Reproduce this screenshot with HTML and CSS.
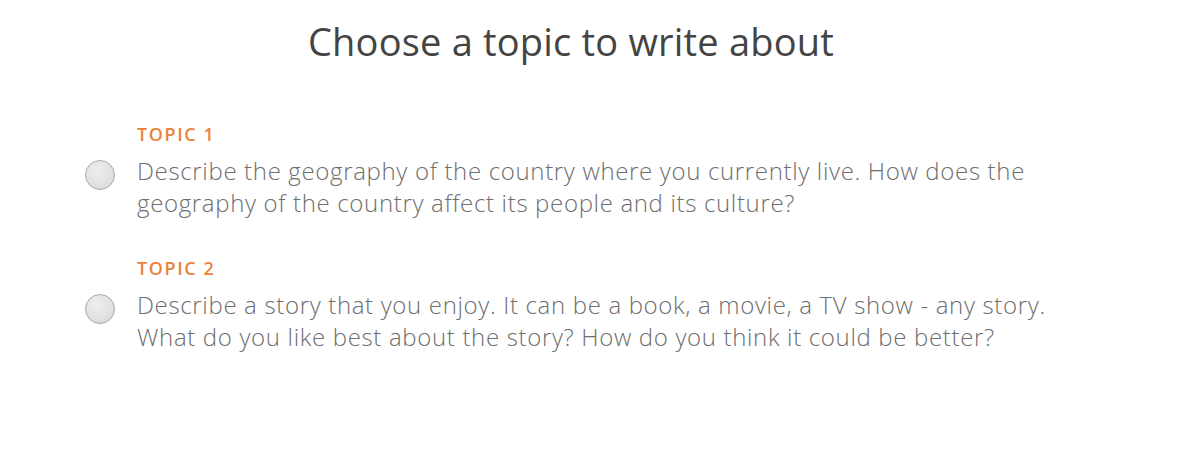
FILE: index.html
```html
<!DOCTYPE html>
<html lang="en">
<head>
    <meta charset="UTF-8">
    <meta name="viewport" content="width=device-width, initial-scale=1.0">
    <title>Choose a topic</title>
    <link rel="stylesheet" href="styles.css">
</head>
<body>
    <div class="page">
        <h1 class="page-title">Choose a topic to write about</h1>
        <div class="topic-list">
            <label class="topic">
                <span class="topic-radio"></span>
                <span class="topic-body">
                    <span class="topic-label">TOPIC 1</span>
                    <span class="topic-text">Describe the geography of the country where you currently live. How does the geography of the country affect its people and its culture?</span>
                </span>
            </label>
            <label class="topic">
                <span class="topic-radio"></span>
                <span class="topic-body">
                    <span class="topic-label">TOPIC 2</span>
                    <span class="topic-text">Describe a story that you enjoy. It can be a book, a movie, a TV show - any story. What do you like best about the story? How do you think it could be better?</span>
                </span>
            </label>
        </div>
    </div>
</body>
</html>
```

FILE: styles.css
```css
body {
    margin: 0;
    background: #fff;
    font-family: "Open Sans", Lato, sans-serif;
}
.page {
    width: 1142px;
    padding-top: 16px;
}
.page-title {
    margin: 0;
    text-align: center;
    font-size: 38px;
    font-weight: 400;
    letter-spacing: 0.2px;
    color: #444;
    line-height: 50px;
}
.topic-list {
    display: flex;
    flex-direction: column;
    gap: 37px;
    margin-top: 56px;
    padding-left: 85px;
}
.topic {
    display: flex;
    align-items: flex-start;
    gap: 22px;
    cursor: pointer;
}
.topic-radio {
    flex: none;
    width: 28px;
    height: 28px;
    margin-top: 38px;
    border-radius: 50%;
    border: 1px solid #a8a8a8;
    background: radial-gradient(circle at 40% 35%, #efefef, #dcdcdc 75%);
}
.topic-body {
    display: flex;
    flex-direction: column;
    width: 915px;
}
.topic-label {
    font-size: 18px;
    font-weight: 600;
    letter-spacing: 1.6px;
    color: #e8833a;
    line-height: 24px;
}
.topic-text {
    margin-top: 9px;
    font-size: 24px;
    font-weight: 300;
    letter-spacing: 0.66px;
    line-height: 32px;
    color: #6e6e6e;
}
```
